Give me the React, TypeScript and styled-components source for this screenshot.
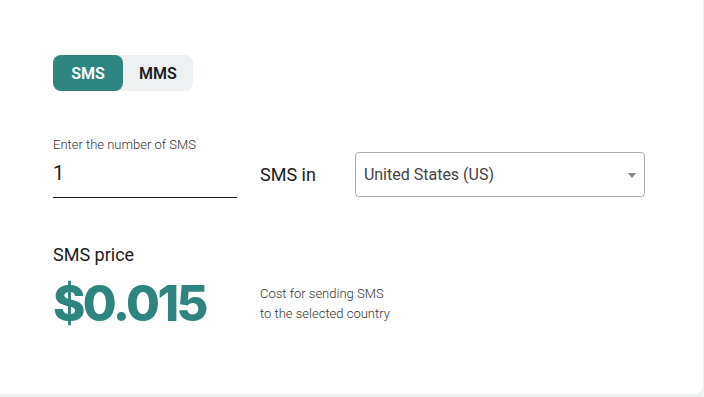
import * as React from "react";
import styled, { createGlobalStyle } from "styled-components";

const GlobalStyle = createGlobalStyle`
  html, body {
    margin: 0;
    padding: 0;
    background: #eef2f2;
    font-family: Roboto, "Liberation Sans", Arial, sans-serif;
    color: #1b1b1b;
  }
`;

const App: React.FC = () => {
  const [kind, setKind] = React.useState<"SMS" | "MMS">("SMS");
  const [count, setCount] = React.useState("1");

  return (
    <>
      <GlobalStyle />
      <Card>
        <Toggle>
          <ToggleButton active={kind === "SMS"} onClick={() => setKind("SMS")}>
            SMS
          </ToggleButton>
          <ToggleButton active={kind === "MMS"} onClick={() => setKind("MMS")}>
            MMS
          </ToggleButton>
        </Toggle>

        <InputRow>
          <Field>
            <FieldLabel>Enter the number of {kind}</FieldLabel>
            <NumberInput value={count} onChange={(e) => setCount(e.target.value)} />
          </Field>
          <InLabel>{kind} in</InLabel>
          <Select>
            <span>United States (US)</span>
            <Caret />
          </Select>
        </InputRow>

        <PriceTitle>{kind} price</PriceTitle>
        <PriceRow>
          <Price>$0.015</Price>
          <PriceNote>
            Cost for sending {kind}
            <br />
            to the selected country
          </PriceNote>
        </PriceRow>
      </Card>
    </>
  );
};

export default App;

/* Styles */
const Card = styled.div`
  box-sizing: border-box;
  width: 703px;
  height: 394px;
  background: #ffffff;
  border-radius: 0 0 8px 0;
  box-shadow: 0px 1px 2px 0px #1b1b1b08;
  padding: 55px 53px 0;
`;

const Toggle = styled.div`
  display: inline-flex;
  background: #eef1f2;
  border-radius: 8px;
  height: 36px;
`;

const ToggleButton = styled.button<{ active: boolean }>`
  width: 70px;
  height: 36px;
  border: none;
  border-radius: 8px;
  padding: 0;
  font-family: Roboto, "Liberation Sans", Arial, sans-serif;
  font-size: 16px;
  font-weight: 600;
  cursor: pointer;
  background: ${(p) => (p.active ? "#2e8580" : "transparent")};
  color: ${(p) => (p.active ? "#ffffff" : "#1c1c24")};
`;

const InputRow = styled.div`
  display: flex;
  align-items: flex-end;
  margin-top: 46px;
`;

const Field = styled.div`
  display: flex;
  flex-direction: column;
  width: 184px;
`;

const FieldLabel = styled.label`
  font-size: 13px;
  font-weight: 300;
  color: #333333;
  line-height: 16px;
`;

const NumberInput = styled.input`
  border: none;
  border-bottom: 1px solid #1b1b1b;
  outline: none;
  padding: 8px 0 12px;
  font-family: Roboto, "Liberation Sans", Arial, sans-serif;
  font-size: 20px;
  font-weight: 400;
  line-height: 24px;
  color: #1b1b1b;
  width: 100%;
`;

const InLabel = styled.div`
  font-size: 18px;
  font-weight: 400;
  margin: 0 39px 13px 23px;
  line-height: 20px;
`;

const Select = styled.div`
  position: relative;
  box-sizing: border-box;
  width: 290px;
  height: 45px;
  margin-bottom: 1px;
  border: 1px solid #aaaaaa;
  border-radius: 4px;
  display: flex;
  align-items: center;
  padding: 0 8px;
  font-size: 16px;
  font-weight: 400;
  color: #444444;
`;

const Caret = styled.span`
  position: absolute;
  right: 8px;
  top: 20px;
  width: 0;
  height: 0;
  border-left: 4px solid transparent;
  border-right: 4px solid transparent;
  border-top: 5px solid #888888;
`;

const PriceTitle = styled.div`
  margin-top: 47px;
  font-size: 18px;
  font-weight: 400;
  line-height: 20px;
`;

const PriceRow = styled.div`
  display: flex;
  align-items: center;
  margin-top: 9px;
`;

const Price = styled.div`
  width: 207px;
  font-family: Inter, Roboto, sans-serif;
  font-size: 49px;
  font-weight: 800;
  color: #2e8580;
  line-height: 60px;
  letter-spacing: -2.5px;
`;

const PriceNote = styled.div`
  font-size: 13px;
  font-weight: 300;
  line-height: 20px;
  color: #333333;
`;
